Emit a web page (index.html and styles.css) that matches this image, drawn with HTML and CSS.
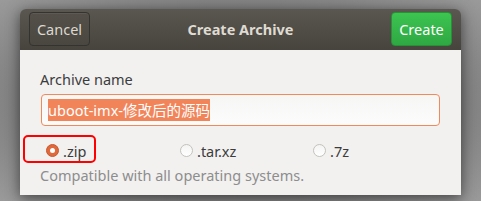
FILE: index.html
```html
<!DOCTYPE html>
<html>
<head>
    <title>Create Archive</title>
    <link rel="stylesheet" href="styles.css">
</head>
<body>
    <div class="dialog">
        <div class="header">
            <button class="btn btn-cancel">Cancel</button>
            <div class="title">Create Archive</div>
            <button class="btn btn-create">Create</button>
        </div>
        <div class="content">
            <div class="label">Archive name</div>
            <div class="entry"><span class="selected">uboot-imx-修改后的源码</span></div>
            <div class="formats">
                <label class="format"><span class="radio checked"></span>.zip</label>
                <label class="format"><span class="radio"></span>.tar.xz</label>
                <label class="format"><span class="radio"></span>.7z</label>
            </div>
            <div class="hint">Compatible with all operating systems.</div>
            <div class="mark"></div>
        </div>
    </div>
</body>
</html>
```

FILE: styles.css
```css
* {
    margin: 0;
    padding: 0;
    box-sizing: border-box;
}

body {
    width: 481px;
    height: 201px;
    overflow: hidden;
    background: radial-gradient(ellipse at 50% 50%, #6e6e6e 40%, #9a9a9a 100%);
    font-family: "Noto Sans", "Noto Sans CJK SC", sans-serif;
    font-size: 14.5px;
}

.dialog {
    width: 441px;
    height: 186px;
    margin: 9px 0 0 20px;
    border-radius: 6px 6px 0 0;
    overflow: hidden;
    box-shadow: 0 3px 14px rgba(0, 0, 0, 0.55);
    display: flex;
    flex-direction: column;
}

.header {
    height: 41px;
    padding: 3px 9px 4px 9px;
    display: flex;
    align-items: center;
    justify-content: space-between;
    background: linear-gradient(#5a5650, #47443e);
}

.btn {
    width: 61px;
    height: 34px;
    border-radius: 4px;
    font-family: inherit;
    font-size: 14.5px;
}

.btn-cancel {
    color: #dcd8cf;
    background: linear-gradient(#545049, #4a4741);
    border: 1px solid #35332f;
    box-shadow: inset 0 1px 0 rgba(255, 255, 255, 0.06);
}

.btn-create {
    color: #fff;
    background: linear-gradient(#3cc450, #2fa843);
    border: 1px solid #279136;
}

.title {
    color: #dfdbd2;
    font-weight: bold;
}

.content {
    flex: 1;
    position: relative;
    background: #f2f1f0;
    padding: 19px 21px 0 20px;
}

.label {
    color: #3c3c3c;
    line-height: 20px;
}

.entry {
    margin: 5px 0 0 1px;
    height: 32px;
    border: 1px solid #f08a5d;
    border-radius: 4px;
    background: linear-gradient(#f6f6f5, #fcfcfc);
    padding: 4px 6px;
}

.selected {
    display: inline-block;
    line-height: 22px;
    background: #f2845a;
    color: #fff;
}

.formats {
    display: grid;
    grid-template-columns: 134px 133px 133px;
    margin-top: 11px;
    height: 27px;
    align-items: center;
}

.format {
    display: flex;
    align-items: center;
    gap: 4px;
    padding-left: 6px;
    color: #3c3c3c;
}

.radio {
    width: 13px;
    height: 13px;
    border-radius: 50%;
    border: 1px solid #c4c2bd;
    background: linear-gradient(#f4f4f3, #ffffff);
}

.radio.checked {
    border-color: #c9582d;
    background: #e0693c;
    position: relative;
}

.radio.checked::after {
    content: "";
    position: absolute;
    left: 3px;
    top: 3px;
    width: 5px;
    height: 5px;
    border-radius: 50%;
    background: #fff;
}

.hint {
    color: #8d8d8d;
    line-height: 20px;
    margin-top: 1px;
}

/* annotation box */
.mark {
    position: absolute;
    left: 3px;
    top: 85px;
    width: 73px;
    height: 28px;
    border: 2px solid #f00;
    border-radius: 5px;
}
```
